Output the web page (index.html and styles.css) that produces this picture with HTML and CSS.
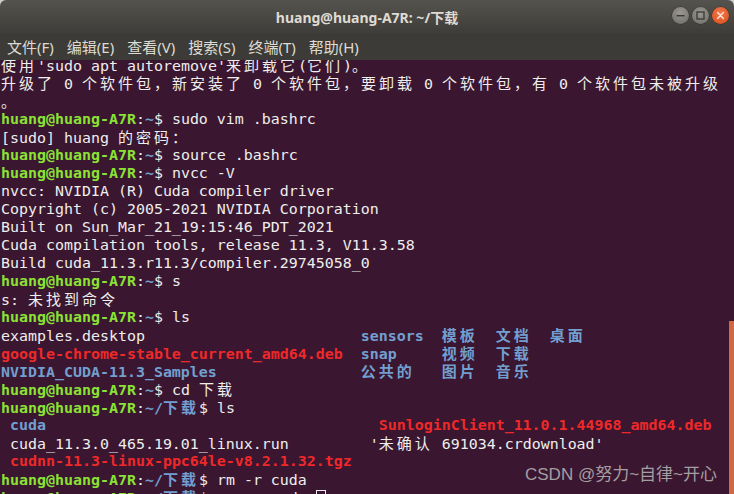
FILE: index.html
```html
<!DOCTYPE html>
<html lang="zh-CN">
<head>
    <meta charset="UTF-8">
    <meta name="viewport" content="width=device-width, initial-scale=1.0">
    <title>huang@huang-A7R: ~/下载</title>
    <link rel="stylesheet" href="styles.css">
</head>
<body>
    <div class="window">
        <div class="titlebar">
            <div class="title">huang@huang-A7R: ~/下载</div>
            <div class="controls">
                <span class="btn btn-min"><svg width="17" height="17" viewBox="0 0 17 17"><rect x="4.5" y="8" width="8" height="1.4" fill="#3a3935"/></svg></span>
                <span class="btn btn-max"><svg width="17" height="17" viewBox="0 0 17 17"><rect x="5" y="5" width="7" height="7" fill="none" stroke="#3a3935" stroke-width="1.3"/></svg></span>
                <span class="btn btn-close"><svg width="17" height="17" viewBox="0 0 17 17"><path d="M5.6 5.6 L11.4 11.4 M11.4 5.6 L5.6 11.4" stroke="#f6e6de" stroke-width="1.4" stroke-linecap="round"/></svg></span>
            </div>
        </div>
        <div class="menubar">
            <span class="menu-item">文件(F)</span>
            <span class="menu-item">编辑(E)</span>
            <span class="menu-item">查看(V)</span>
            <span class="menu-item">搜索(S)</span>
            <span class="menu-item">终端(T)</span>
            <span class="menu-item">帮助(H)</span>
        </div>
        <div class="terminal">
            <div class="screen">
<div class="line"><span class="w">使用</span>'sudo apt autoremove'<span class="w">来卸载它</span>(<span class="w">它们</span>)<span class="w">。</span></div>
<div class="line"><span class="w">升级了</span> 0 <span class="w">个软件包，新安装了</span> 0 <span class="w">个软件包，要卸载</span> 0 <span class="w">个软件包，有</span> 0 <span class="w">个软件包未被升级</span></div>
<div class="line"><span class="w">。</span></div>
<div class="line"><span class="g">huang@huang-A7R</span>:<span class="b">~</span>$ sudo vim .bashrc</div>
<div class="line">[sudo] huang <span class="w">的密码：</span></div>
<div class="line"><span class="g">huang@huang-A7R</span>:<span class="b">~</span>$ source .bashrc</div>
<div class="line"><span class="g">huang@huang-A7R</span>:<span class="b">~</span>$ nvcc -V</div>
<div class="line">nvcc: NVIDIA (R) Cuda compiler driver</div>
<div class="line">Copyright (c) 2005-2021 NVIDIA Corporation</div>
<div class="line">Built on Sun_Mar_21_19:15:46_PDT_2021</div>
<div class="line">Cuda compilation tools, release 11.3, V11.3.58</div>
<div class="line">Build cuda_11.3.r11.3/compiler.29745058_0</div>
<div class="line"><span class="g">huang@huang-A7R</span>:<span class="b">~</span>$ s</div>
<div class="line">s: <span class="w">未找到命令</span></div>
<div class="line"><span class="g">huang@huang-A7R</span>:<span class="b">~</span>$ ls</div>
<div class="line">examples.desktop                        <span class="b">sensors</span>  <span class="b w">模板</span>  <span class="b w">文档</span>  <span class="b w">桌面</span></div>
<div class="line"><span class="r">google-chrome-stable_current_amd64.deb</span>  <span class="b">snap</span>     <span class="b w">视频</span>  <span class="b w">下载</span></div>
<div class="line"><span class="b">NVIDIA_CUDA-11.3_Samples</span>                <span class="b w">公共的</span>   <span class="b w">图片</span>  <span class="b w">音乐</span></div>
<div class="line"><span class="g">huang@huang-A7R</span>:<span class="b">~</span>$ cd <span class="w">下载</span></div>
<div class="line"><span class="g">huang@huang-A7R</span>:<span class="b">~/<span class="w">下载</span></span>$ ls</div>
<div class="line"> <span class="b">cuda</span>                                     <span class="r">SunloginClient_11.0.1.44968_amd64.deb</span></div>
<div class="line"> cuda_11.3.0_465.19.01_linux.run         '<span class="w">未确认</span> 691034.crdownload'</div>
<div class="line"> <span class="r">cudnn-11.3-linux-ppc64le-v8.2.1.32.tgz</span></div>
<div class="line"><span class="g">huang@huang-A7R</span>:<span class="b">~/<span class="w">下载</span></span>$ rm -r cuda</div>
<div class="line"><span class="g">huang@huang-A7R</span>:<span class="b">~/<span class="w">下载</span></span>$ rm -r cudnn<span class="cursor"></span></div>
            </div>
            <div class="scroll-thumb"></div>
            <div class="watermark">CSDN @努力~自律~开心</div>
        </div>
    </div>
</body>
</html>
```

FILE: styles.css
```css
body {
    margin: 0;
    padding: 0;
    width: 734px;
    height: 494px;
    overflow: hidden;
    background: #cfcfcf;
}

.window {
    display: flex;
    flex-direction: column;
    height: 494px;
    border-radius: 6px 6px 0 0;
    overflow: hidden;
}

.titlebar {
    display: flex;
    align-items: center;
    justify-content: center;
    position: relative;
    height: 33px;
    background: linear-gradient(#54534e, #3e3d39);
}

.title {
    font-family: "Noto Sans", "Noto Sans CJK SC", sans-serif;
    font-size: 14px;
    font-weight: bold;
    color: #dfdbd2;
    padding-top: 1px;
}

.controls {
    position: absolute;
    right: 5px;
    top: 7px;
    display: flex;
    gap: 3px;
}

.btn {
    display: block;
    width: 17px;
    height: 17px;
    border-radius: 50%;
}

.btn svg {
    display: block;
}

.btn-min,
.btn-max {
    background: radial-gradient(circle at 50% 35%, #9a9891, #6d6b65);
    box-shadow: 0 0 0 0.5px #2f2e2a;
}

.btn-close {
    background: radial-gradient(circle at 50% 35%, #f2774b, #d94d1c);
    box-shadow: 0 0 0 0.5px #2f2e2a;
}

.menubar {
    display: flex;
    align-items: center;
    gap: 13px;
    height: 27px;
    padding-left: 7px;
    background: #3c3b37;
    font-family: "Noto Sans", "Noto Sans CJK SC", sans-serif;
    font-size: 15px;
    color: #dfdbd2;
}

.terminal {
    flex: 1;
    position: relative;
    overflow: hidden;
    background: #3a1630;
}

.screen {
    margin-top: -4px;
    padding-left: 1px;
    font-family: "DejaVu Sans Mono", "Noto Sans CJK SC", monospace;
    font-size: 14.95px;
    color: #eeeeec;
}

.line {
    height: 18px;
    line-height: 18px;
    white-space: pre;
}

.w {
    font-family: "Noto Sans CJK SC", sans-serif;
    font-size: 15px;
    letter-spacing: 3px;
    line-height: 18px;
}

.g {
    color: #8ae234;
    font-weight: bold;
}

.b {
    color: #729fcf;
    font-weight: bold;
}

.r {
    color: #ef2929;
    font-weight: bold;
}

.cursor {
    display: inline-block;
    box-sizing: border-box;
    width: 10px;
    height: 17px;
    border: 1px solid #eeeeec;
    vertical-align: -4px;
}

.scroll-thumb {
    position: absolute;
    right: 0;
    top: 261px;
    bottom: 0;
    width: 5px;
    background: #d2683f;
}

.watermark {
    position: absolute;
    right: 17px;
    bottom: 9px;
    font-family: "Liberation Sans", "Noto Sans CJK SC", sans-serif;
    font-size: 17px;
    color: #a49ea2;
}
```
